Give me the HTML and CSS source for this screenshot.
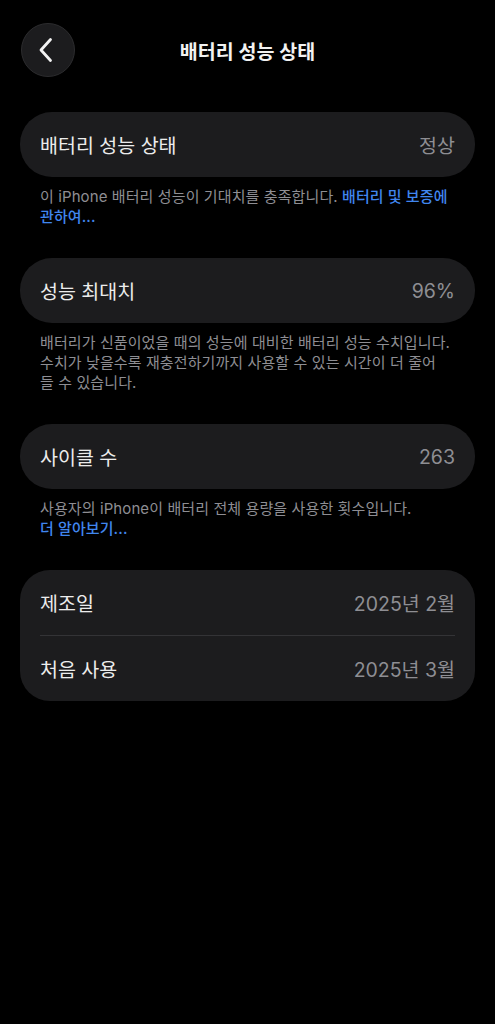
FILE: index.html
```html
<!DOCTYPE html>
<html lang="ko">
<head>
<meta charset="utf-8">
<title>배터리 성능 상태</title>
<link rel="stylesheet" href="styles.css">
</head>
<body>
<div class="screen">
  <header class="nav">
    <button class="back" aria-label="뒤로">
      <svg width="16" height="26" viewBox="0 0 16 26"><path d="M12.5 2.5 L3 13 L12.5 23.5" fill="none" stroke="#f2f2f2" stroke-width="2.8" stroke-linecap="round" stroke-linejoin="round"/></svg>
    </button>
    <h1 class="title">배터리 성능 상태</h1>
  </header>

  <section class="card">
    <div class="row"><span class="label">배터리 성능 상태</span><span class="value">정상</span></div>
  </section>
  <p class="note">이 iPhone 배터리 성능이 기대치를 충족합니다. <a class="link">배터리 및 보증에<br>관하여...</a></p>

  <section class="card">
    <div class="row"><span class="label">성능 최대치</span><span class="value">96%</span></div>
  </section>
  <p class="note">배터리가 신품이었을 때의 성능에 대비한 배터리 성능 수치입니다.<br>수치가 낮을수록 재충전하기까지 사용할 수 있는 시간이 더 줄어<br>들 수 있습니다.</p>

  <section class="card">
    <div class="row"><span class="label">사이클 수</span><span class="value">263</span></div>
  </section>
  <p class="note">사용자의 iPhone이 배터리 전체 용량을 사용한 횟수입니다.<br><a class="link">더 알아보기...</a></p>

  <section class="card group">
    <div class="row"><span class="label">제조일</span><span class="value">2025년 2월</span></div>
    <div class="sep"></div>
    <div class="row"><span class="label">처음 사용</span><span class="value">2025년 3월</span></div>
  </section>
</div>
</body>
</html>
```

FILE: styles.css
```css
html, body {
  margin: 0;
  padding: 0;
  background: #000;
}
body {
  font-family: "Inter", "Noto Sans CJK KR", "Noto Sans", sans-serif;
  color: #f2f2f2;
}
.screen {
  width: 495px;
  min-height: 1024px;
  background: #000;
}
.nav {
  position: relative;
  display: flex;
  align-items: center;
  justify-content: center;
  padding: 23px 20px 0 20px;
  height: 54px;
  margin-bottom: 35px;
}
.back {
  position: absolute;
  left: 21px;
  top: 23px;
  width: 54px;
  height: 54px;
  border-radius: 50%;
  background: #1c1c1e;
  border: 1px solid #2c2c2e;
  box-sizing: border-box;
  display: flex;
  align-items: center;
  justify-content: center;
  padding: 0 4px 0 0;
}
.title {
  margin: 0;
  font-size: 19.5px;
  font-weight: 600;
  color: #f2f2f2;
}
.card {
  margin: 0 20px;
  background: #1c1c1e;
  border-radius: 32px;
  padding: 0 20px;
}
.group {
  border-radius: 30px;
}
.row {
  height: 65px;
  display: flex;
  align-items: center;
  justify-content: space-between;
}
.label {
  font-size: 19.5px;
  color: #ececec;
}
.value {
  font-size: 19.5px;
  color: #8e8e93;
}
.sep {
  height: 1px;
  background: #333336;
}
.note {
  margin: 0 20px 31px 20px;
  padding: 10px 20px 0 20px;
  font-size: 15px;
  line-height: 20px;
  letter-spacing: 0.1px;
  color: #8e8e93;
}
.link {
  color: #4086ee;
  font-weight: 500;
}
```
